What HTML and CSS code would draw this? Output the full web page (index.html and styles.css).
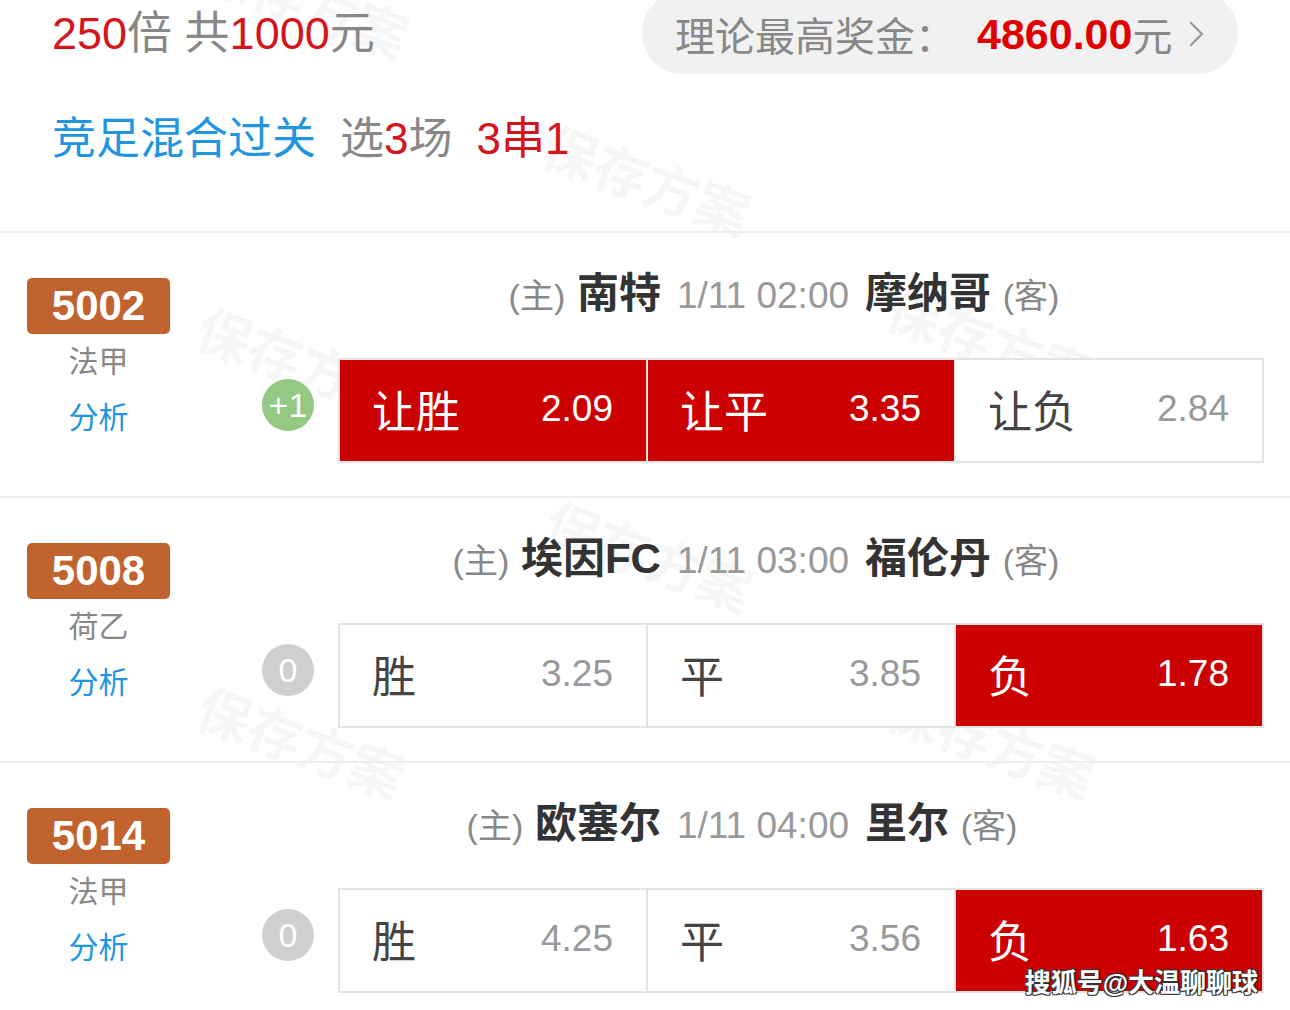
FILE: index.html
```html
<!DOCTYPE html>
<html lang="zh-CN">
<head>
    <meta charset="UTF-8">
    <meta name="viewport" content="width=device-width, initial-scale=1.0">
    <title>方案详情</title>
    <link rel="stylesheet" href="styles.css">
</head>
<body>
    <div class="page">
        <div class="watermarks">
            <span class="wm wm-a">保存方案</span>
            <span class="wm wm-b">保存方案</span>
            <span class="wm wm-c">保存方案</span>
            <span class="wm wm-d">保存方案</span>
            <span class="wm wm-e">保存方案</span>
            <span class="wm wm-f">保存方案</span>
            <span class="wm wm-g">保存方案</span>
        </div>

        <header class="summary">
            <div class="summary-top">
                <div class="multiple"><em>250</em>倍 共<em>1000</em>元</div>
                <a class="prize" href="#">
                    理论最高奖金：<strong>4860.00</strong>元
                    <svg class="chevron" width="18" height="30" viewBox="0 0 18 30">
                        <path d="M3 4 L14 15 L3 26" fill="none" stroke="#9a9a9a" stroke-width="2.4" stroke-linecap="round" stroke-linejoin="round"/>
                    </svg>
                </a>
            </div>
            <div class="summary-type">
                <span class="play">竞足混合过关</span>
                <span class="pick">选<em>3</em>场</span>
                <span class="pass">3串1</span>
            </div>
        </header>

        <section class="match">
            <div class="match-info">
                <div class="match-no">5002</div>
                <div class="league">法甲</div>
                <a class="analysis" href="#">分析</a>
            </div>
            <div class="match-main">
                <div class="teams">
                    <span class="home"><small>(主)</small> 南特</span>
                    <span class="time">1/11 02:00</span>
                    <span class="away">摩纳哥 <small>(客)</small></span>
                </div>
                <div class="bet-row">
                    <span class="handicap plus">+1</span>
                    <div class="odds">
                        <div class="cell on"><span>让胜</span><b>2.09</b></div>
                        <div class="cell on"><span>让平</span><b>3.35</b></div>
                        <div class="cell"><span>让负</span><b>2.84</b></div>
                    </div>
                </div>
            </div>
        </section>

        <section class="match">
            <div class="match-info">
                <div class="match-no">5008</div>
                <div class="league">荷乙</div>
                <a class="analysis" href="#">分析</a>
            </div>
            <div class="match-main">
                <div class="teams">
                    <span class="home"><small>(主)</small> 埃因FC</span>
                    <span class="time">1/11 03:00</span>
                    <span class="away">福伦丹 <small>(客)</small></span>
                </div>
                <div class="bet-row">
                    <span class="handicap">0</span>
                    <div class="odds">
                        <div class="cell"><span>胜</span><b>3.25</b></div>
                        <div class="cell"><span>平</span><b>3.85</b></div>
                        <div class="cell on"><span>负</span><b>1.78</b></div>
                    </div>
                </div>
            </div>
        </section>

        <section class="match">
            <div class="match-info">
                <div class="match-no">5014</div>
                <div class="league">法甲</div>
                <a class="analysis" href="#">分析</a>
            </div>
            <div class="match-main">
                <div class="teams">
                    <span class="home"><small>(主)</small> 欧塞尔</span>
                    <span class="time">1/11 04:00</span>
                    <span class="away">里尔 <small>(客)</small></span>
                </div>
                <div class="bet-row">
                    <span class="handicap">0</span>
                    <div class="odds">
                        <div class="cell"><span>胜</span><b>4.25</b></div>
                        <div class="cell"><span>平</span><b>3.56</b></div>
                        <div class="cell on"><span>负</span><b>1.63</b></div>
                    </div>
                </div>
            </div>
        </section>

        <div class="source-mark">搜狐号@大温聊聊球</div>
    </div>
</body>
</html>
```

FILE: styles.css
```css
body {
    margin: 0;
    padding: 0;
    background: #fff;
    font-family: "Liberation Sans", "Noto Sans CJK SC", sans-serif;
    color: #333;
}

.page {
    position: relative;
    width: 1290px;
    height: 1010px;
    overflow: hidden;
}

a {
    text-decoration: none;
}

em {
    font-style: normal;
}

/* faint "save plan" stamps behind the content */
.watermarks {
    position: absolute;
    inset: 0;
    z-index: 0;
}

.wm {
    position: absolute;
    width: 220px;
    font-size: 54px;
    font-weight: bold;
    line-height: 54px;
    color: rgba(0, 0, 0, 0.035);
    transform: rotate(20deg);
    white-space: nowrap;
}

.wm-a { left: 196px; top: -22px; }
.wm-b { left: 538px; top: 156px; }
.wm-c { left: 192px; top: 338px; }
.wm-d { left: 882px; top: 318px; }
.wm-e { left: 540px; top: 532px; }
.wm-f { left: 192px; top: 718px; }
.wm-g { left: 882px; top: 718px; }

.summary,
.match {
    position: relative;
    z-index: 1;
}

.summary {
    padding: 0 52px 62px;
    border-bottom: 2px solid #ededed;
}

.summary-top {
    display: flex;
    justify-content: space-between;
    align-items: flex-start;
    height: 70px;
}

.multiple {
    font-size: 45px;
    line-height: 68px;
    color: #888;
}

.multiple em,
.pick em,
.pass {
    color: #d6141c;
}

.prize {
    display: flex;
    align-items: center;
    height: 80px;
    margin-top: -8px;
    padding: 2px 26px 0 33px;
    width: 537px;
    box-sizing: content-box;
    border-radius: 40px;
    background: #f1f1f1;
    font-size: 40px;
    color: #888;
}

.prize strong {
    margin-left: 22px;
    font-size: 43px;
    color: #e00000;
}

.chevron {
    margin-left: 16px;
}

.summary-type {
    display: flex;
    align-items: center;
    gap: 24px;
    margin-top: 39px;
    font-size: 44px;
    line-height: 60px;
}

.play {
    color: #2196df;
}

.pick {
    color: #888;
}

.match {
    display: flex;
    height: 263px;
    border-bottom: 2px solid #ededed;
}

.match-info {
    display: flex;
    flex-direction: column;
    align-items: center;
    width: 143px;
    margin: 45px 0 0 27px;
}

.match-no {
    width: 143px;
    height: 56px;
    line-height: 56px;
    border-radius: 5px;
    background: #c1632f;
    color: #fff;
    font-size: 42px;
    font-weight: bold;
    text-align: center;
}

.league,
.analysis {
    font-size: 30px;
    line-height: 56px;
}

.league {
    color: #888;
}

.analysis {
    color: #2196df;
}

.match-main {
    flex: 1;
    margin: 0 26px 0 92px;
}

.teams {
    display: grid;
    grid-template-columns: 1fr auto 1fr;
    gap: 16px;
    align-items: baseline;
    height: 50px;
    line-height: 50px;
    margin-top: 36px;
    white-space: nowrap;
}

.home,
.away {
    font-size: 42px;
    font-weight: bold;
    color: #333;
}

.home {
    text-align: right;
}

.teams small {
    font-size: 34px;
    font-weight: normal;
    color: #888;
}

.time {
    font-size: 37px;
    color: #999;
}

.bet-row {
    display: flex;
    align-items: center;
    margin-top: 39px;
}

.handicap {
    flex: none;
    width: 52px;
    height: 52px;
    margin: 0 24px 12px 0;
    border-radius: 50%;
    background: #cfcfcf;
    color: #fff;
    font-size: 34px;
    line-height: 52px;
    text-align: center;
}

.handicap.plus {
    background: #93c983;
}

.odds {
    flex: 1;
    display: grid;
    grid-template-columns: repeat(3, 1fr);
    gap: 2px;
    height: 101px;
    border: 2px solid #e4e4e4;
    background: #e4e4e4;
}

.cell {
    display: flex;
    justify-content: space-between;
    align-items: center;
    padding: 0 33px 4px 32px;
    background: #fff;
}

.cell span {
    font-size: 44px;
    color: #444;
}

.cell b {
    font-size: 37px;
    font-weight: normal;
    color: #999;
}

.cell.on {
    background: #cc0000;
}

.cell.on span,
.cell.on b {
    color: #fff;
}

.source-mark {
    position: absolute;
    right: 32px;
    top: 962px;
    z-index: 2;
    font-size: 26px;
    font-weight: bold;
    color: #fff;
    text-shadow: 1px 1px 0 #333, -1px -1px 0 #333, 1px -1px 0 #333, -1px 1px 0 #333;
}
```
